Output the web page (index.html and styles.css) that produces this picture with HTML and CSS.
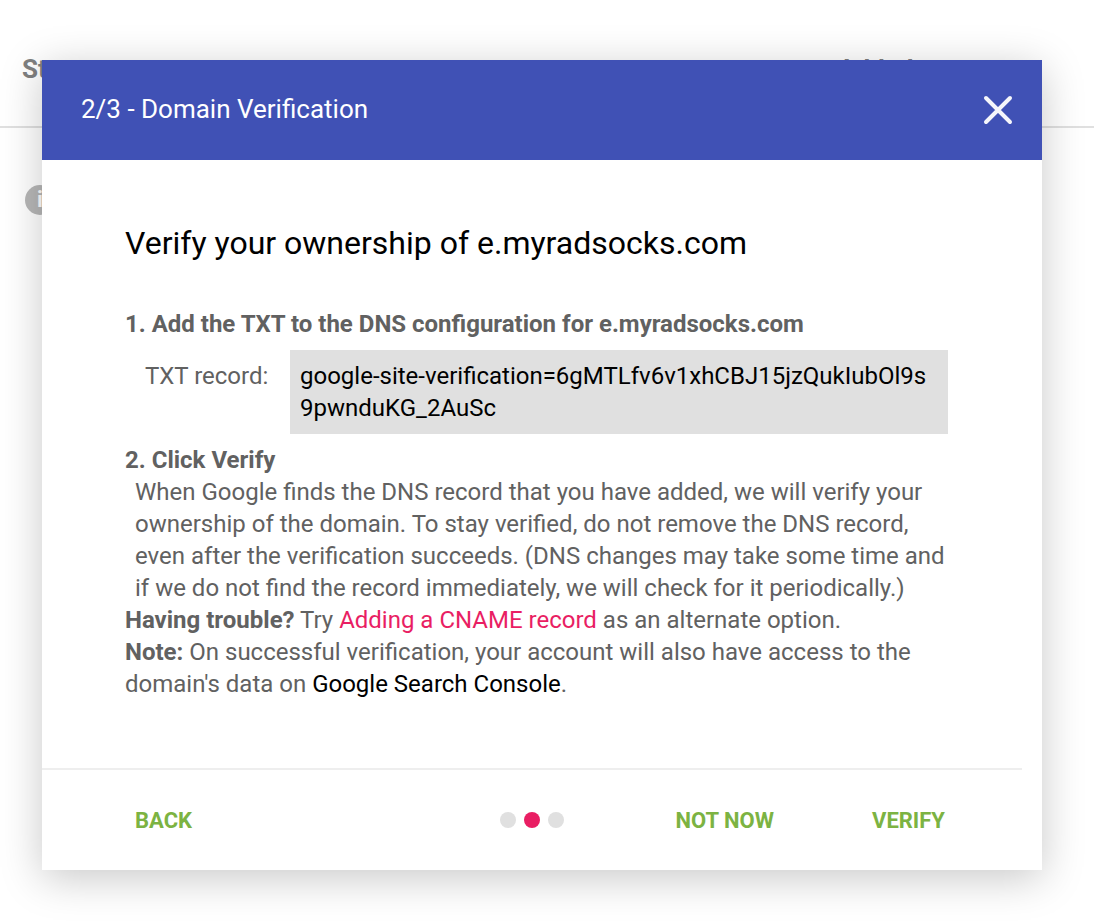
FILE: index.html
```html
<!DOCTYPE html>
<html lang="en">
<head>
    <meta charset="UTF-8">
    <meta name="viewport" content="width=device-width, initial-scale=1.0">
    <title>Domain Verification</title>
    <link rel="stylesheet" href="styles.css">
</head>
<body>

<div class="page">
    <table class="domains">
        <thead>
            <tr>
                <th>Status</th>
                <th class="added">Added</th>
            </tr>
        </thead>
        <tbody>
            <tr>
                <td colspan="2"><span class="info">i</span></td>
            </tr>
        </tbody>
    </table>
</div>

<div class="dialog" role="dialog" aria-labelledby="dialog-title">
    <header class="dialog-header">
        <h1 class="dialog-title" id="dialog-title">2/3 - Domain Verification</h1>
        <button class="close" aria-label="Close">
            <svg width="30" height="30" viewBox="0 0 30 30"><path d="M3 3L27 27M27 3L3 27" stroke="currentColor" stroke-width="4" stroke-linecap="round" fill="none"/></svg>
        </button>
    </header>

    <main class="dialog-body">
        <h2 class="heading">Verify your ownership of e.myradsocks.com</h2>

        <h3 class="step">1. Add the TXT to the DNS configuration for e.myradsocks.com</h3>
        <div class="record">
            <span class="record-label">TXT record:</span>
            <code class="record-value">google-site-verification=6gMTLfv6v1xhCBJ15jzQukIubOl9s9pwnduKG_2AuSc</code>
        </div>

        <h3 class="step">2. Click Verify</h3>
        <p class="details">When Google finds the DNS record that you have added, we will verify your ownership of the domain. To stay verified, do not remove the DNS record, even after the verification succeeds. (DNS changes may take some time and if we do not find the record immediately, we will check for it periodically.)</p>
        <p><b>Having trouble?</b> Try <a class="link" href="#">Adding a CNAME record</a> as an alternate option.</p>
        <p><b>Note:</b> On successful verification, your account will also have access to the domain's data on <a class="console" href="#">Google Search Console</a>.</p>
    </main>

    <footer class="dialog-footer">
        <button class="action back">Back</button>
        <div class="dots">
            <span class="dot"></span>
            <span class="dot active"></span>
            <span class="dot"></span>
        </div>
        <div class="actions">
            <button class="action">Not now</button>
            <button class="action">Verify</button>
        </div>
    </footer>
</div>

</body>
</html>
```
FILE: styles.css
```css
* {
    box-sizing: border-box;
}
body {
    margin: 0;
    min-height: 100vh;
    padding: 60px 52px 52px 42px;
    background-color: #ffffff;
    color: #616161;
    font-family: Roboto, sans-serif;
    font-size: 24px;
    line-height: 32px;
}
h1, h2, h3, p {
    margin: 0;
}
button {
    border: none;
    background: none;
    font-family: inherit;
    cursor: pointer;
}
a {
    text-decoration: none;
}

/* page behind the dialog */
.page {
    position: absolute;
    top: 0;
    left: 0;
    right: 0;
}
.domains {
    width: 100%;
    border-spacing: 0;
}
.domains th {
    height: 128px;
    padding: 12px 0 0 22px;
    border-bottom: 2px solid #e0e0e0;
    color: #808080;
    font-size: 26px;
    text-align: left;
}
.domains th.added {
    width: 256px;
    padding-left: 0;
}
.domains td {
    padding: 57px 25px 0;
}
.info {
    display: block;
    width: 30px;
    height: 30px;
    border-radius: 50%;
    background-color: #b8b8b8;
    color: #ffffff;
    font-size: 22px;
    font-weight: bold;
    line-height: 30px;
    text-align: center;
}

.dialog {
    position: relative;
    background-color: #ffffff;
    box-shadow: 0 8px 40px rgba(0, 0, 0, 0.22);
}
.dialog-header {
    display: flex;
    justify-content: space-between;
    align-items: center;
    height: 100px;
    padding: 0 29px 0 39px;
    background-color: #4051b5;
    color: #ffffff;
}
.dialog-title {
    padding-bottom: 2px;
    font-size: 26px;
    font-weight: normal;
}
.close {
    padding: 0;
    color: #f5f6fb;
}
.close svg {
    display: block;
}
.dialog-body {
    padding: 62px 94px 68px 83px;
}
.heading {
    margin-bottom: 44px;
    color: #000000;
    font-size: 32px;
    font-weight: normal;
    line-height: 42px;
}
.step {
    font-size: 24px;
}
.record {
    display: flex;
    margin: 10px 0;
    padding-left: 20px;
}
.record-label {
    flex: 0 0 145px;
    padding-top: 10px;
}
.record-value {
    flex: 1;
    min-width: 0;
    padding: 10px;
    background-color: #e0e0e0;
    color: #000000;
    font-family: inherit;
    word-break: break-all;
}
.details {
    padding-left: 10px;
}
.link {
    color: #e91e63;
}
.console {
    color: #000000;
}
.dialog-footer {
    display: grid;
    grid-template-columns: 1fr auto 1fr;
    align-items: center;
    height: 102px;
    margin-right: 20px;
    padding: 0 77px;
    border-top: 2px solid #eeeeee;
}
.action {
    padding: 0;
    color: #7cb342;
    font-size: 22px;
    font-weight: bold;
    text-transform: uppercase;
}
.back {
    justify-self: start;
    padding-left: 16px;
}
.actions {
    display: flex;
    justify-content: flex-end;
    gap: 98px;
}
.dots {
    display: flex;
    gap: 8px;
}
.dot {
    width: 16px;
    height: 16px;
    border-radius: 50%;
    background-color: #e0e0e0;
}
.dot.active {
    background-color: #e91e63;
}
```
